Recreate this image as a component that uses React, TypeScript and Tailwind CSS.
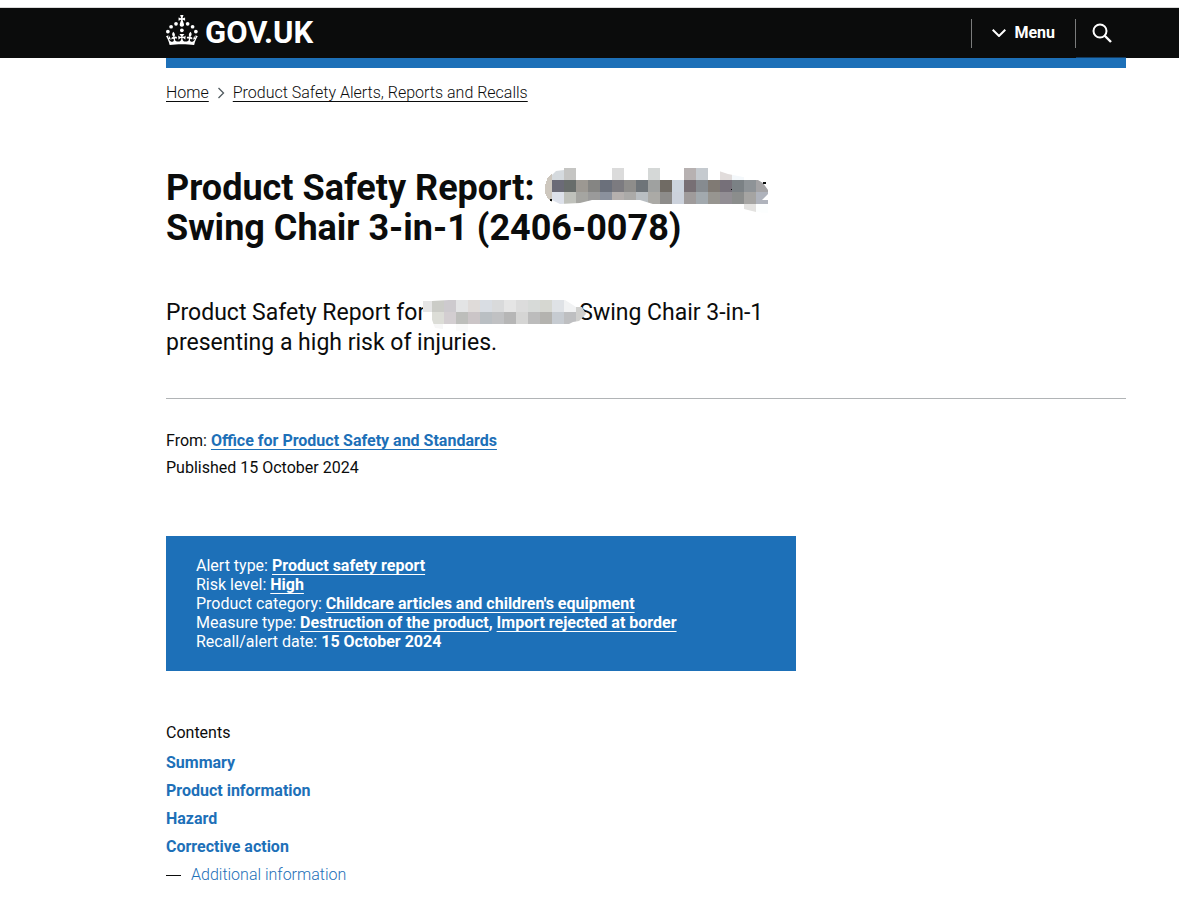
import React from "react";

const details = [
  { label: "Alert type", links: ["Product safety report"] },
  { label: "Risk level", links: ["High"] },
  { label: "Product category", links: ["Childcare articles and children's equipment"] },
  { label: "Measure type", links: ["Destruction of the product", "Import rejected at border"] },
];

const contents = ["Summary", "Product information", "Hazard", "Corrective action"];

// mosaic rows, one colour per 12px cell
const titleRows = [
  ["#d5dade", "#c5c5c3", "", "", "", "#dbdbdb", "", "", "#d5d8d7", "", "", "#b7b1b1", "#c5cacf", "", "#e1dcdb", "#f4f8fb", "", ""],
  ["#6b6b77", "#686d6b", "#9c9892", "#858583", "#6b707b", "#7c7b80", "#8e8d8b", "#6e7479", "#9fa1a0", "#706b64", "#ccd4de", "#776f74", "#868b90", "#807a74", "#767079", "#7b8185", "#8e9397", "#a4a3a5"],
  ["#dde1ea", "#bfc1bb", "#a5a5a1", "#9a9a9a", "#8b919d", "#b5b0ae", "#abaaa8", "#b9bec2", "#abaaa6", "#8d8c8a", "#ccd2dc", "#9f9b9b", "#a2a9ae", "#979590", "#928e94", "#8b8d8c", "#a5a4a2", "#afb3bc"],
  ["", "", "", "", "", "", "", "", "", "", "", "", "", "", "", "", "#e3e2e0", "#fcfefe"],
];

const summaryRows = [
  ["#e5e5e5", "#cbccc7", "#cdcace", "#e3e4e5", "#dfdbd9", "#d9dde3", "#d9dadb", "#e5e5e5", "#dcdcdc", "#d7dad8", "#d6d7d1", "#dfe2e6", "#f1f2f3", "#d0d0ce"],
  ["", "#dcddd7", "#d3ced1", "#bdbebb", "#cbc5c7", "#babfc3", "#c0c1c3", "#b6b6b6", "#d5d5d4", "#bcbcbc", "#b4b3af", "#c6cbd1", "#bebfc1", "#d0d0ce"],
  ["", "#f7f7f7", "", "#fafafa", "", "", "", "", "", "", "", "", "", ""],
];

const Cells: React.FC<{ rows: string[][] }> = ({ rows }) => (
  <>
    {rows.map((row, y) =>
      row.map((fill, x) =>
        fill ? <rect key={`${x}-${y}`} x={x * 12} y={y * 12} width="12" height="12" fill={fill} /> : null
      )
    )}
  </>
);

const TitleMosaic: React.FC = () => (
  <svg aria-hidden="true" className="absolute left-0.5 top-0" width="224" height="46" viewBox="-7 0 224 46" shapeRendering="crispEdges">
    <defs>
      <clipPath id="title-shape">
        <path d="M0 7L4 3L12 2V0H158L176 6L196 10V12H206L211 15L216 22V26L210 32H216V45L204 44L192 41V36L120 38L104 37L88 32H40L28 35L8 36L0 32Z" />
      </clipPath>
    </defs>
    <path d="M0 6L-4 9L-7 17V25L-4 31L0 34Z" fill="#cdc7be" />
    <g clipPath="url(#title-shape)">
      <Cells rows={titleRows} />
    </g>
    <path d="M-2 31h2v2h-2zM211 14h3v2h-3zM179 21h1v1h-1z" fill="#0b0c0c" />
  </svg>
);

const SummaryMosaic: React.FC = () => (
  <svg aria-hidden="true" className="absolute left-0 top-0.5" width="165" height="34" viewBox="0 0 165 34" shapeRendering="crispEdges">
    <defs>
      <clipPath id="summary-shape">
        <path d="M0 1L9 1L26 0H142L150 5L153 7L159 7L163 14L156 21L150 22L146 24H45V32L33 31V24H20V29L12 28L8 17L0 12Z" />
      </clipPath>
    </defs>
    <g clipPath="url(#summary-shape)">
      <g transform="translate(-3 0)">
        <Cells rows={summaryRows} />
      </g>
    </g>
  </svg>
);

const Crown: React.FC = () => (
  <svg aria-hidden="true" width="32" height="30" viewBox="0 0 64 60" fill="currentColor">
    <circle cx="20" cy="17.6" r="3.7" />
    <circle cx="10.2" cy="23.5" r="3.7" />
    <circle cx="3.7" cy="33.2" r="3.7" />
    <circle cx="31.7" cy="30.6" r="3.7" />
    <circle cx="43.3" cy="17.6" r="3.7" />
    <circle cx="53.2" cy="23.5" r="3.7" />
    <circle cx="59.7" cy="33.2" r="3.7" />
    <path d="M33.1,9.8c.2-.1.3-.3.5-.5l4.6,2.4v-6.8l-4.6,1.5c-.1-.2-.3-.3-.5-.5l1.9-5.9h-6.7l1.9,5.9c-.2.1-.3.3-.5.5l-4.6-1.5v6.8l4.6-2.4c.1.2.3.3.5.5l-2.6,8c-.9,2.8,1.2,5.7,4.1,5.7h0c3,0,5.1-2.9,4.1-5.7l-2.6-8ZM37,37.9s-3.4,3.8-4.1,6.1c2.2,0,4.2-.5,6.4-2.8l-.7,8.5c-2-2.8-4.4-4.1-5.7-3.8.1,3.1.5,6.7,5.8,7.2,3.7.3,6.7-1.5,7-3.8.4-2.6-2-4.3-3.7-1.6-1.4-4.5,2.4-6.1,4.9-3.2-1.9-4.5-1.8-7.7,2.4-10.9,3,4,2.6,7.3-1.2,11.1,2.4-1.3,6.2,0,4,4.6-1.2-2.8-3.7-2.2-4.2.2-.3,1.7.7,3.7,3,4.2,1.9.3,4.7-.9,7-5.9-1.3,0-2.4.7-3.9,1.7l2.4-8c.6,2.3,1.4,3.7,2.2,4.5.6-1.6.5-2.8,0-5.3l5,1.8c-2.6,3.6-5.2,8.7-7.3,17.5-7.4-1.1-15.7-1.7-24.5-1.7h0c-8.8,0-17.1.6-24.5,1.7-2.1-8.9-4.7-13.9-7.3-17.5l5-1.8c-.5,2.5-.6,3.7,0,5.3.8-.8,1.6-2.3,2.2-4.5l2.4,8c-1.5-1-2.6-1.7-3.9-1.7,2.3,5,5.2,6.2,7,5.9,2.3-.4,3.3-2.4,3-4.2-.5-2.4-3-3.1-4.2-.2-2.2-4.6,1.6-6,4-4.6-3.7-3.7-4.2-7.1-1.2-11.1,4.2,3.2,4.3,6.4,2.4,10.9,2.5-2.8,6.3-1.3,4.9,3.2-1.8-2.7-4.1-1-3.7,1.6.3,2.3,3.3,4.1,7,3.8,5.4-.5,5.7-4.2,5.8-7.2-1.3-.2-3.7,1-5.7,3.8l-.7-8.5c2.2,2.3,4.2,2.7,6.4,2.8-.7-2.3-4.1-6.1-4.1-6.1h10.6Z" />
  </svg>
);

const App: React.FC = () => {
  return (
    <div className="bg-white font-[Roboto,sans-serif] text-base text-[#0b0c0c]">
      <div className="h-2 border-b border-[#dadada] bg-white" />
      <header className="bg-[#0b0c0c] pl-[166px] pr-[53px] text-white">
        <div className="relative flex h-[50px] max-w-[960px] items-center justify-between">
          <a href="#" className="flex items-start gap-[7px] pb-0.5">
            <Crown />
            <span className="pt-0.5 text-[31px] font-bold leading-8">GOV.UK</span>
          </a>
          <div className="flex h-[29px] items-stretch">
            <button type="button" className="flex items-center gap-2 border-l border-[#7b7c7c] px-5 font-bold">
              <svg aria-hidden="true" width="14" height="8" viewBox="0 0 14 8" fill="none" stroke="currentColor" strokeWidth="2">
                <path d="M.7 .7L7 7L13.3 .7" />
              </svg>
              Menu
            </button>
            <button type="button" aria-label="Search GOV.UK" className="flex w-[51px] items-center border-l border-[#7b7c7c] pl-4">
              <svg aria-hidden="true" width="20" height="20" viewBox="0 0 20 20" fill="none" stroke="currentColor" strokeWidth="2">
                <circle cx="8" cy="8" r="6.5" />
                <path d="M12.5 12.5l6.5 6.5" strokeWidth="2.4" />
              </svg>
            </button>
          </div>
          <span className="absolute bottom-0 right-0 h-px w-[50px] bg-[#133c61]" />
        </div>
      </header>

      <div className="pl-[166px] pr-[53px]">
        <div className="max-w-[960px]">
          <div className="h-[10px] bg-[#1d70b8]" />

          <nav aria-label="Breadcrumb" className="mt-[15px] flex items-center font-light leading-5">
            <a href="#" className="underline decoration-1 underline-offset-3">Home</a>
            <svg aria-hidden="true" className="mx-2" width="8" height="12" viewBox="0 0 8 12" fill="none" stroke="#505a5f" strokeWidth="1.3">
              <path d="M1.5 1l5 5-5 5" />
            </svg>
            <a href="#" className="underline decoration-1 underline-offset-3">Product Safety Alerts, Reports and Recalls</a>
          </nav>

          <main>
            <h1 className="mt-[65px] max-w-[630px] text-[36px] font-bold leading-10">
              Product Safety Report:{" "}
              <span className="relative inline-block h-9 w-[224px] align-top">
                <TitleMosaic />
              </span>{" "}
              Swing Chair 3-in-1 (2406-0078)
            </h1>

            <p className="mt-[50px] max-w-[630px] text-[23px] leading-[30px]">
              Product Safety Report for
              <span className="relative -ml-0.5 inline-block h-[30px] w-[156px] align-top">
                <SummaryMosaic />
              </span>
              Swing Chair 3-in-1 presenting a high risk of injuries.
            </p>

            <hr className="mt-10 border-[#b1b4b6]" />

            <dl className="mt-7 leading-[27px]">
              <div className="flex gap-1">
                <dt>From:</dt>
                <dd>
                  <a href="#" className="font-bold text-[#1d70b8] underline decoration-1 underline-offset-3">
                    Office for Product Safety and Standards
                  </a>
                </dd>
              </div>
              <div className="flex gap-1">
                <dt>Published</dt>
                <dd>15 October 2024</dd>
              </div>
            </dl>

            <dl className="mt-[55px] max-w-[630px] bg-[#1d70b8] px-[30px] py-5 leading-[19px] text-white">
              {details.map(({ label, links }) => (
                <div key={label} className="flex gap-1">
                  <dt>{label}:</dt>
                  <dd className="font-bold">
                    {links.map((link, i) => (
                      <React.Fragment key={link}>
                        {i > 0 && ", "}
                        <a href="#" className="underline decoration-1 underline-offset-3">{link}</a>
                      </React.Fragment>
                    ))}
                  </dd>
                </div>
              ))}
              <div className="flex gap-1">
                <dt>Recall/alert date:</dt>
                <dd className="font-bold">15 October 2024</dd>
              </div>
            </dl>

            <nav aria-label="Contents" className="mt-12 leading-7">
              <h2>Contents</h2>
              <ol className="mt-0.5">
                {contents.map((item) => (
                  <li key={item}>
                    <a href="#" className="font-bold text-[#1d70b8]">{item}</a>
                  </li>
                ))}
                <li className="flex items-center gap-[10px]">
                  <span aria-hidden="true" className="h-px w-[15px] bg-[#0b0c0c]" />
                  <a href="#" className="font-light text-[#1d70b8]">Additional information</a>
                </li>
              </ol>
            </nav>
          </main>
        </div>
      </div>
    </div>
  );
};

export default App;
